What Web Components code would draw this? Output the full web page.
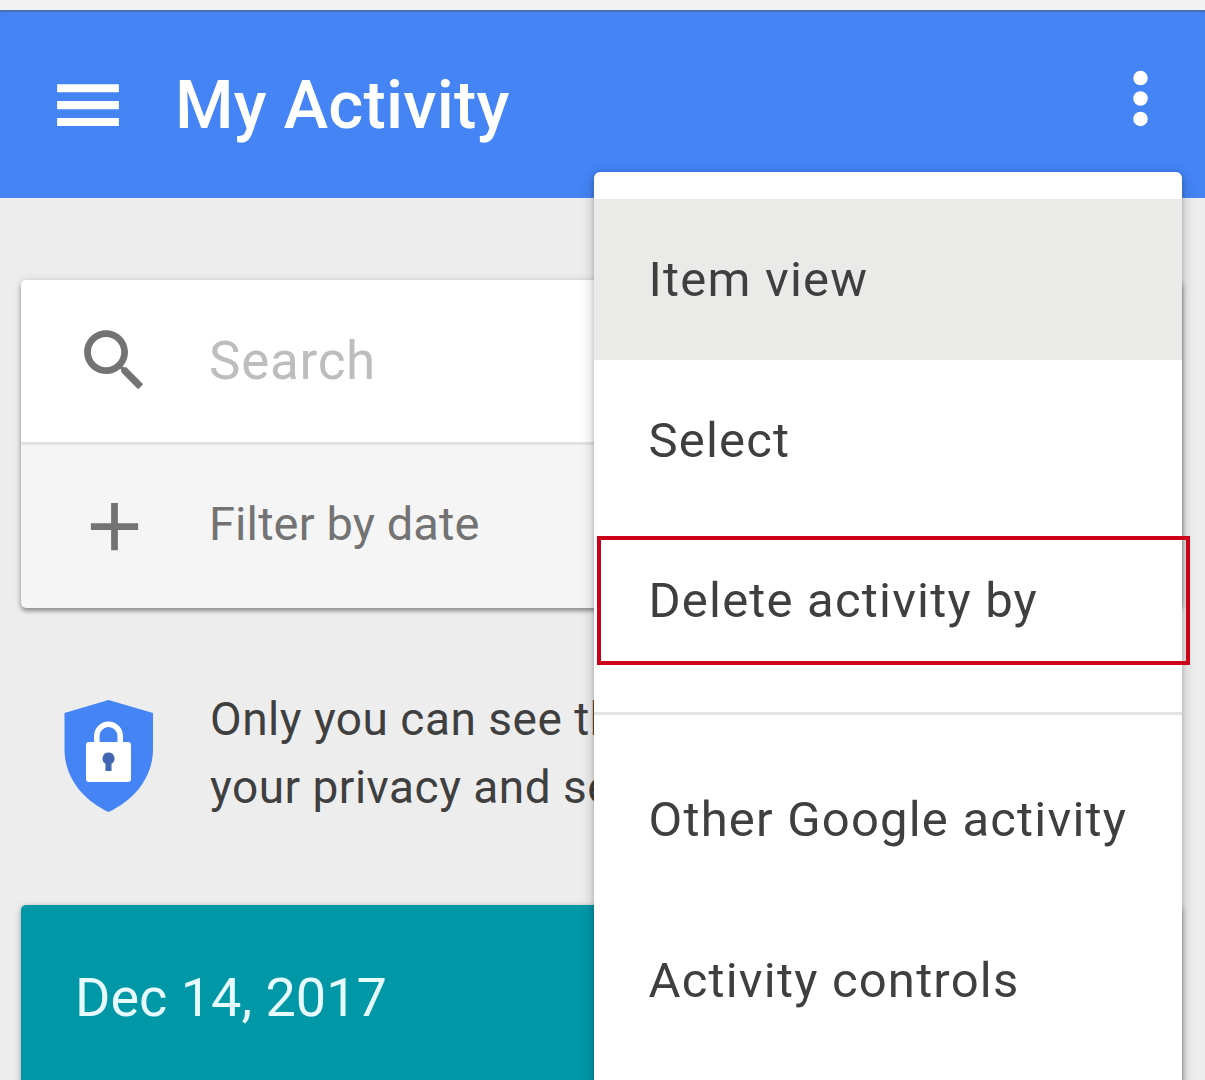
<!DOCTYPE html>
<html lang="en">
<head>
<meta charset="utf-8">
<title>My Activity</title>
<style>
  html, body {
    margin: 0;
    height: 1080px;
    overflow: hidden;
  }
  body {
    background: #ededed;
    color: #3f3f3f;
    font-family: Roboto, "Liberation Sans", sans-serif;
  }
</style>
</head>
<body>
<activity-page>
  <app-bar slot="bar">My Activity</app-bar>
  <search-card>
    <card-row icon="search" variant="search">Search</card-row>
    <card-row icon="add" variant="filter">Filter by date</card-row>
  </search-card>
  <privacy-note>
    <div>Only you can see th</div>
    <div>your privacy and se</div>
  </privacy-note>
  <date-card>Dec 14, 2017</date-card>
  <overflow-menu slot="menu">
    <menu-item active>Item view</menu-item>
    <menu-item>Select</menu-item>
    <menu-item marked>Delete activity by</menu-item>
    <menu-divider></menu-divider>
    <menu-item>Other Google activity</menu-item>
    <menu-item>Activity controls</menu-item>
  </overflow-menu>
</activity-page>

<script>
class BaseElement extends HTMLElement {
  constructor() {
    super();
    this.attachShadow({ mode: "open" });
  }

  connectedCallback() {
    this.shadowRoot.innerHTML = `<style>${this.constructor.styles}</style>${this.template()}`;
  }

  template() {
    return "<slot></slot>";
  }
}

class MdIcon extends BaseElement {
  static paths = {
    menu: "M3 18.1h18.3v-2.4H3zm0-5h18.3v-2.4H3zm0-7.4v2.4h18.3V5.7z",
    more: "M12 8.1a2.15 2.15 0 1 0 0-4.3 2.15 2.15 0 0 0 0 4.3zm0 1.75a2.15 2.15 0 1 0 0 4.3 2.15 2.15 0 0 0 0-4.3zm0 6.05a2.15 2.15 0 1 0 0 4.3 2.15 2.15 0 0 0 0-4.3z",
    search: "M15.5 14h-.79l-.28-.27C15.41 12.59 16 11.11 16 9.5 16 5.91 13.09 3 9.5 3S3 5.91 3 9.5 5.91 16 9.5 16c1.61 0 3.09-.59 4.23-1.57l.27.28v.79l5 4.99L20.49 19l-4.99-5zm-6 0C7.01 14 5 11.99 5 9.5S7.01 5 9.5 5 14 7.01 14 9.5 11.99 14 9.5 14z",
    add: "M19 13h-6v6h-2v-6H5v-2h6V5h2v6h6v2z",
  };

  static styles = /*css*/ `
    :host {
      display: block;
      flex: none;
      width: 81px;
      height: 81px;
    }
    svg {
      display: block;
      width: 100%;
      height: 100%;
      fill: currentColor;
    }
  `;

  template() {
    return `<svg viewBox="0 0 24 24"><path d="${MdIcon.paths[this.getAttribute("name")]}"/></svg>`;
  }
}

class ActivityPage extends BaseElement {
  static styles = /*css*/ `
    :host {
      display: block;
      position: relative;
      height: 1080px;
      overflow: hidden;
    }
    main {
      display: flex;
      flex-direction: column;
      padding: 82px 23px 0 21px;
    }
  `;

  template() {
    return `<slot name="bar"></slot><main><slot></slot></main><slot name="menu"></slot>`;
  }
}

class AppBar extends BaseElement {
  static styles = /*css*/ `
    :host {
      display: flex;
      align-items: center;
      box-sizing: border-box;
      height: 198px;
      padding: 2px 24px 0 47px;
      border-top: 10px solid #f2f2f2;
      background: #4484f5;
      box-shadow: inset 0 3px 2px -1px #4a6ea9;
      color: #fff;
    }
    h1 {
      flex: 1;
      margin: 0 0 0 47px;
      font-size: 67px;
      font-weight: 500;
      line-height: 80px;
      letter-spacing: .2px;
    }
    md-icon[name="more"] {
      margin-bottom: 14px;
    }
  `;

  template() {
    return `<md-icon name="menu"></md-icon><h1><slot></slot></h1><md-icon name="more"></md-icon>`;
  }
}

class SearchCard extends BaseElement {
  static styles = /*css*/ `
    :host {
      display: flex;
      flex-direction: column;
      height: 328px;
      border-radius: 5px;
      background: #f5f5f5;
      box-shadow: 0 3px 4px rgba(0, 0, 0, .36), 0 0 8px rgba(0, 0, 0, .12);
    }
  `;
}

class CardRow extends BaseElement {
  static styles = /*css*/ `
    :host {
      display: flex;
      align-items: center;
      gap: 54px;
      box-sizing: border-box;
      height: 163px;
      padding-left: 53px;
      color: #737373;
      font-size: 47px;
      letter-spacing: .1px;
    }
    :host([variant="search"]) {
      height: 165px;
      padding-bottom: 1px;
      border-bottom: 3px solid #e2e2e2;
      border-radius: 5px 5px 0 0;
      background: #fff;
      font-size: 53px;
      letter-spacing: .7px;
    }
    :host([variant="search"]) span {
      color: #bdbdbd;
    }
    :host([variant="filter"]) span {
      padding-bottom: 6px;
    }
  `;

  template() {
    return `<md-icon name="${this.getAttribute("icon")}"></md-icon><span><slot></slot></span>`;
  }
}

class PrivacyNote extends BaseElement {
  static styles = /*css*/ `
    :host {
      display: flex;
      height: 297px;
      padding-left: 43px;
      box-sizing: border-box;
    }
    svg {
      flex: none;
      width: 90px;
      height: 113px;
      margin: 91px 56px 0 0;
    }
    .text {
      padding-top: 78px;
      font-size: 46px;
      line-height: 67.500px;
      letter-spacing: .5px;
      white-space: nowrap;
    }
  `;

  template() {
    return `
      <svg viewBox="0 0 90 113">
        <path d="M44.5 1 89 14v36c0 27-17 50-44.500 63C17 100 .5 77 .5 50V14z" fill="#4484f5"/>
        <path d="M32.800 46V37a11.700 11.700 0 0 1 23.400 0v9" fill="none" stroke="#fff" stroke-width="5.500"/>
        <rect x="22" y="43" width="45" height="40" rx="3" fill="#fff"/>
        <path d="M44.500 53.500a6 6 0 0 1 3 11.200V72h-6v-7.300a6 6 0 0 1 3-11.200z" fill="#4267b2"/>
      </svg>
      <div class="text"><slot></slot></div>`;
  }
}

class DateCard extends BaseElement {
  static styles = /*css*/ `
    :host {
      display: flex;
      align-items: center;
      box-sizing: border-box;
      height: 184px;
      padding: 0 55px 0 54px;
      border-radius: 5px 5px 0 0;
      background: #0097a7;
      box-shadow: 0 2px 6px rgba(0, 0, 0, .35);
      color: #e6fbff;
      font-size: 54px;
      letter-spacing: 0;
    }
  `;
}

class OverflowMenu extends BaseElement {
  static styles = /*css*/ `
    :host {
      position: absolute;
      top: 172px;
      left: 594px;
      display: flex;
      flex-direction: column;
      box-sizing: border-box;
      width: 587.5px;
      height: 960px;
      padding-top: 27px;
      border-radius: 6px;
      background: #fff;
      box-shadow: 0 4px 14px rgba(0, 0, 0, .24), 0 1px 4px rgba(0, 0, 0, .16);
    }
  `;
}

class MenuItem extends BaseElement {
  static styles = /*css*/ `
    :host {
      display: flex;
      position: relative;
      flex: none;
      align-items: center;
      box-sizing: border-box;
      height: 161px;
      padding-left: 54.500px;
      font-size: 49px;
      letter-spacing: 1.2px;
      white-space: nowrap;
    }
    :host([active]) {
      background: #eaeae9;
    }
    :host([marked]) {
      padding-bottom: 2px;
    }
    :host([marked])::after {
      content: "";
      position: absolute;
      top: 15px;
      left: 3px;
      box-sizing: border-box;
      width: 593px;
      height: 129px;
      border: 4px solid #cc0019;
    }
  `;
}

class MenuDivider extends BaseElement {
  static styles = /*css*/ `
    :host {
      display: block;
      flex: none;
      height: 3px;
      margin: 30px 0 24px;
      background: #e4e4e4;
    }
  `;
}

customElements.define("md-icon", MdIcon);
customElements.define("activity-page", ActivityPage);
customElements.define("app-bar", AppBar);
customElements.define("search-card", SearchCard);
customElements.define("card-row", CardRow);
customElements.define("privacy-note", PrivacyNote);
customElements.define("date-card", DateCard);
customElements.define("overflow-menu", OverflowMenu);
customElements.define("menu-item", MenuItem);
customElements.define("menu-divider", MenuDivider);
</script>
</body>
</html>
